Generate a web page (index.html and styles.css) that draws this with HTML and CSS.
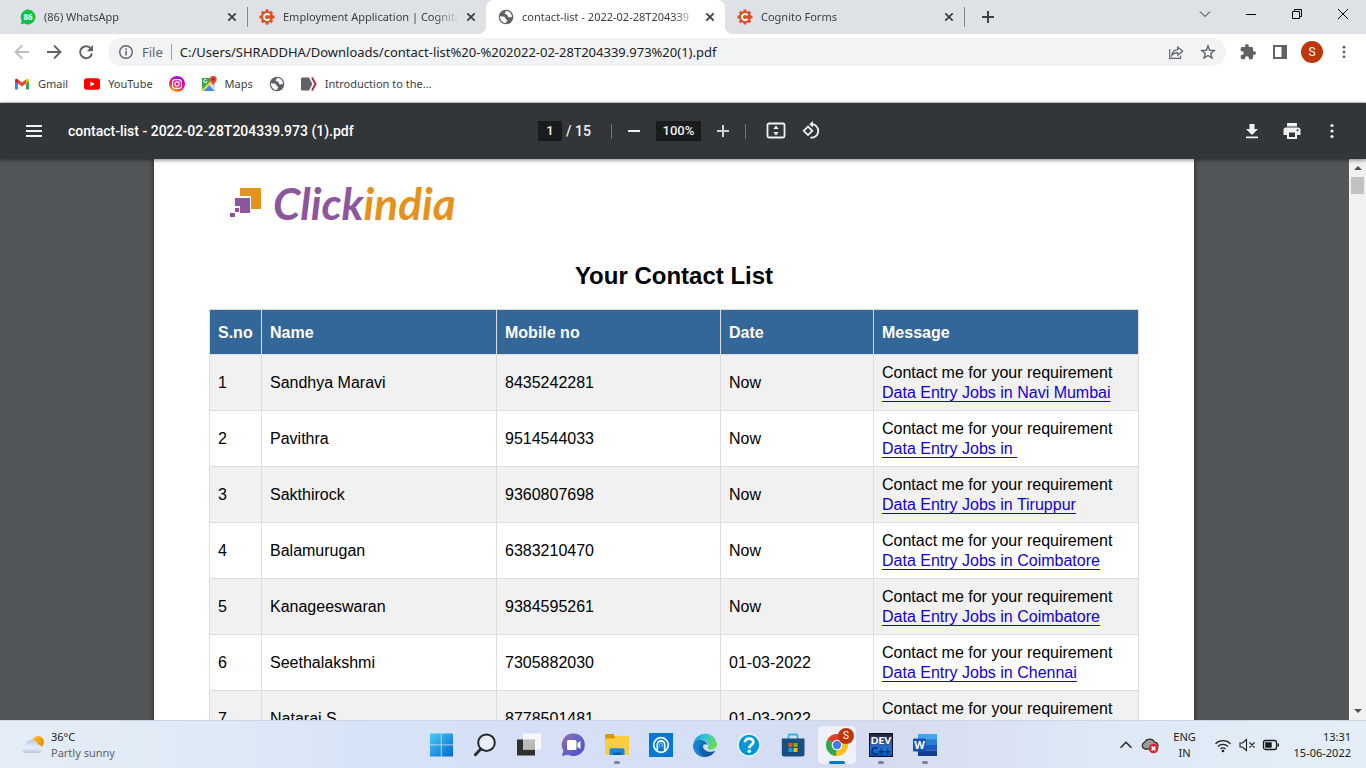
FILE: index.html
```html
<!DOCTYPE html>
<html lang="en">
<head>
<meta charset="utf-8">
<meta name="viewport" content="width=device-width, initial-scale=1">
<title>contact-list - 2022-02-28T204339.973 (1).pdf</title>
<link rel="stylesheet" href="styles.css">
</head>
<body>
<svg class="sprite" aria-hidden="true">
  <symbol id="x" viewBox="0 0 16 16"><path d="M4.3 4.3l7.4 7.4M11.7 4.3l-7.4 7.4" stroke="#3c4043" stroke-width="1.8" fill="none"/></symbol>
  <symbol id="cog" viewBox="0 0 16 16">
    <path d="M8 .5v15M.5 8h15M2.8 2.8l10.4 10.4M13.2 2.8L2.8 13.2" stroke="#dc5026" stroke-width="3"/>
    <circle cx="8" cy="8" r="6" fill="#dc5026"/>
    <path d="M10.500 6.300a3 3 0 1 0 0 3.400" stroke="#fff" stroke-width="1.900" fill="none"/>
  </symbol>
  <symbol id="globe" viewBox="0 0 16 16">
    <circle cx="8" cy="8" r="7.300" fill="#5f6368"/>
    <path d="M1.900 7.100c1.700.9 3.200.2 4.600.9 1.200.8.7 2.100 2.100 2.400 1.100.3.6 1.800-.3 2.500-.6.5-.5 1.200-1.100 1.200C4 13.600 1.900 10.900 1.900 7.100zM7.900 2.100c.2 1.400-1.200 1.300-1.100 2.500.2 1.200 1.900.5 2.600 1.500.6 1 .1 1.800 1.400 2.200 1.200.4 1.800-.6 3.200-.3C14.100 4.800 11.400 2 7.900 2.100z" fill="#fff"/>
  </symbol>
  <symbol id="dots" viewBox="0 0 16 16"><circle cx="8" cy="2.500" r="1.600"/><circle cx="8" cy="8" r="1.600"/><circle cx="8" cy="13.500" r="1.600"/></symbol>
</svg>

<header class="browser">
  <div class="tabs">
    <div class="tab">
      <svg class="i16" viewBox="0 0 16 16"><path d="M8 .6a7.400 7.400 0 1 1-3.500 13.900L.8 15.300l.9-3.600A7.400 7.400 0 0 1 8 .6z" fill="#0dc143"/><text x="8" y="10.800" class="wa-count">86</text></svg>
      <span class="tab-title">(86) WhatsApp</span>
      <button class="tab-close" aria-label="Close tab"><svg class="i16"><use href="#x"/></svg></button>
    </div>
    <div class="tab divided">
      <svg class="i16"><use href="#cog"/></svg>
      <span class="tab-title">Employment Application | Cognito</span>
      <button class="tab-close" aria-label="Close tab"><svg class="i16"><use href="#x"/></svg></button>
    </div>
    <div class="tab active">
      <svg class="i16"><use href="#globe"/></svg>
      <span class="tab-title">contact-list - 2022-02-28T204339</span>
      <button class="tab-close" aria-label="Close tab"><svg class="i16"><use href="#x"/></svg></button>
    </div>
    <div class="tab">
      <svg class="i16"><use href="#cog"/></svg>
      <span class="tab-title">Cognito Forms</span>
      <button class="tab-close" aria-label="Close tab"><svg class="i16"><use href="#x"/></svg></button>
    </div>
    <button class="new-tab" aria-label="New tab"><svg class="i16" viewBox="0 0 16 16"><path d="M8 2v12M2 8h12" stroke="#3c4043" stroke-width="2"/></svg></button>
    <div class="window-controls">
      <button aria-label="Search tabs"><svg class="i16" viewBox="0 0 16 16"><path d="M3 5.500l5 5 5-5" stroke="#222" fill="none"/></svg></button>
      <button aria-label="Minimize"><svg class="i16" viewBox="0 0 16 16"><path d="M3 8.500h10" stroke="#000"/></svg></button>
      <button aria-label="Restore"><svg class="i16" viewBox="0 0 16 16"><path d="M3.500 5.500h7v7h-7zM5.500 5.500v-2h7v7h-2" stroke="#000" fill="none"/></svg></button>
      <button aria-label="Close"><svg class="i16" viewBox="0 0 16 16"><path d="M3 3l10 10M13 3L3 13" stroke="#000"/></svg></button>
    </div>
  </div>

  <div class="toolbar">
    <button class="tool" aria-label="Back"><svg class="i16" viewBox="0 0 16 16"><path d="M15 8H2M8 1.500L1.500 8 8 14.500" stroke="#babcbe" stroke-width="1.800" fill="none"/></svg></button>
    <button class="tool" aria-label="Forward"><svg class="i16" viewBox="0 0 16 16"><path d="M1 8h13M8 1.500L14.500 8 8 14.500" stroke="#5f6368" stroke-width="1.800" fill="none"/></svg></button>
    <button class="tool" aria-label="Reload"><svg class="i16" viewBox="0 0 16 16"><path d="M13 4.600A6 6 0 1 0 14 9.500" stroke="#5f6368" stroke-width="2" fill="none"/><path d="M15 1v6.200H8.800z" fill="#5f6368"/></svg></button>
    <div class="omnibox">
      <svg class="i16" viewBox="0 0 16 16"><circle cx="8" cy="8" r="6.300" fill="none" stroke="#5f6368" stroke-width="1.400"/><path d="M8 7v4.500M8 4.300V6" stroke="#5f6368" stroke-width="1.500"/></svg>
      <span class="scheme">File</span>
      <input class="url" aria-label="Address" value="C:/Users/SHRADDHA/Downloads/contact-list%20-%202022-02-28T204339.973%20(1).pdf">
      <button class="tool" aria-label="Share"><svg class="i16" viewBox="0 0 16 16"><path d="M1.700 5v9.300h10.800v-2.500M3.800 11.500c.5-3.900 2.500-5.700 6-5.900V3l4.900 4.200-4.900 4V8.700c-2.600 0-4.500.8-6 2.800z" stroke="#5f6368" stroke-width="1.200" fill="none"/></svg></button>
      <button class="tool" aria-label="Bookmark"><svg class="i16" viewBox="0 0 16 16"><path d="M8 2l1.700 4.300 4.600.3-3.500 2.900 1.100 4.500L8 11.500 4.100 14l1.100-4.500-3.500-2.900 4.600-.3z" stroke="#5f6368" stroke-width="1.400" fill="none"/></svg></button>
    </div>
    <button class="tool" aria-label="Extensions"><svg class="i16" viewBox="1 1 22 22"><path fill="#5f6368" d="M20.500 11H19V7a2 2 0 0 0-2-2h-4V3.500a2.500 2.500 0 0 0-5 0V5H4a2 2 0 0 0-2 2v3.800h1.500a2.700 2.700 0 0 1 0 5.400H2V20a2 2 0 0 0 2 2h3.800v-1.500a2.700 2.700 0 0 1 5.400 0V22H17a2 2 0 0 0 2-2v-4h1.500a2.500 2.500 0 0 0 0-5z"/></svg></button>
    <button class="tool" aria-label="Side panel"><svg class="i16" viewBox="0 0 16 16"><path d="M1 1h14v14H1zM3 3v10h6.500V3z" fill="#5f6368" fill-rule="evenodd"/></svg></button>
    <button class="tool" aria-label="Profile"><span class="avatar">S</span></button>
    <button class="tool" aria-label="Menu"><svg class="i14" fill="#5f6368"><use href="#dots"/></svg></button>
  </div>

  <nav class="bookmarks">
    <a href="#"><svg class="i16" viewBox="0 0 16 16"><path d="M1 4v8.500c0 .7.400 1 1 1h2V7z" fill="#4285f4"/><path d="M15 4v8.500c0 .7-.4 1-1 1h-2V7z" fill="#34a853"/><path d="M4 3.600l4 3 4-3V7.500l-4 3-4-3z" fill="#ea4335"/><path d="M1 4.500c0-1.900 1.700-2.300 3-.9v3.900L1 5.300z" fill="#c5221f"/><path d="M15 4.500c0-1.900-1.700-2.300-3-.9v3.900l3-2.200z" fill="#fbbc04"/></svg>Gmail</a>
    <a href="#"><svg class="i16" viewBox="0 0 16 16"><rect y="2.300" width="16" height="11.400" rx="2.800" fill="#f00"/><path d="M6.400 5.500v5l4.300-2.500z" fill="#fff"/></svg>YouTube</a>
    <a href="#" aria-label="Instagram"><svg class="i16" viewBox="0 0 16 16"><defs><linearGradient id="ig" x1=".2" y1="1" x2=".7" y2="0"><stop offset="0" stop-color="#ffc800"/><stop offset=".4" stop-color="#ff1f56"/><stop offset=".75" stop-color="#d300c5"/><stop offset="1" stop-color="#7a18f0"/></linearGradient></defs><circle cx="8" cy="8" r="8" fill="url(#ig)"/><rect x="3.600" y="3.600" width="8.800" height="8.800" rx="2.400" fill="none" stroke="#fff" stroke-width="1.100"/><circle cx="8" cy="8" r="2.100" fill="none" stroke="#fff" stroke-width="1.100"/><circle cx="10.700" cy="5.400" r=".6" fill="#fff"/></svg></a>
    <a href="#"><svg class="i16" viewBox="0 0 16 16"><path d="M1 2h13v13H1z" fill="#34a853"/><path d="M8 8l6-3v10h-3z" fill="#d5d8dc"/><path d="M2.500 15L8 9.500l5.500 5.500z" fill="#4285f4"/><path d="M1 13.500L10.500 4l1.500 1.500L2.500 15H1z" fill="#fbd14b"/><path d="M6 5a1.600 1.600 0 1 1-.5-1.100" stroke="#fff" fill="none"/><path d="M12.300 0a3.300 3.300 0 0 1 3.300 3.300c0 2.700-2.700 3.500-3.300 6.700-.6-3.200-3.300-4-3.300-6.700A3.300 3.300 0 0 1 12.300 0z" fill="#ea4335"/><circle cx="12.300" cy="3.300" r="1.100" fill="#8c1c14"/></svg>Maps</a>
    <a href="#" aria-label="Website"><svg class="i16"><use href="#globe"/></svg></a>
    <a href="#"><svg class="i16" viewBox="0 0 16 16"><path d="M1.500 1.500H8L11.300 8 8 14.500H1.500c-1 0-1.500-.5-1.500-1.500V3c0-1 .5-1.500 1.500-1.500z" fill="#5f6166"/><path d="M11 1.500L14.500 8 11 14.500" stroke="#c22649" stroke-width="2" fill="none"/></svg>Introduction to the...</a>
  </nav>
</header>

<section class="pdf-bar">
  <div class="pdf-file">
    <button class="pdf-btn" aria-label="Menu"><svg class="i18" viewBox="0 0 18 18"><path d="M1 4h16M1 9h16M1 14h16" stroke="#f1f1f1" stroke-width="2"/></svg></button>
    <span class="pdf-title">contact-list - 2022-02-28T204339.973 (1).pdf</span>
  </div>
  <div class="pdf-controls">
    <input class="page-no" aria-label="Page number" value="1"><span class="page-count">/ 15</span>
    <span class="rule"></span>
    <button class="pdf-btn" aria-label="Zoom out"><svg class="i18" viewBox="0 0 18 18"><path d="M3 9h12" stroke="#f1f1f1" stroke-width="2"/></svg></button>
    <input class="zoom" aria-label="Zoom level" value="100%">
    <button class="pdf-btn" aria-label="Zoom in"><svg class="i18" viewBox="0 0 18 18"><path d="M3 9h12M9 3v12" stroke="#d0d1d2" stroke-width="2"/></svg></button>
    <span class="rule tight"></span>
    <button class="pdf-btn" aria-label="Fit to page"><svg class="i20" viewBox="0 0 20 20"><rect x="1.500" y="2.500" width="17" height="14" rx="1.500" stroke="#f1f1f1" stroke-width="1.800" fill="none"/><path d="M10 4.500L12.700 8H7.300zM10 14.500L12.700 11H7.300z" fill="#f1f1f1"/></svg></button>
    <button class="pdf-btn" aria-label="Rotate"><svg class="i20" viewBox="0 0 20 20"><path d="M1.700 9.800L6 5.500l4.300 4.300L6 14.100z" stroke="#f1f1f1" stroke-width="1.800" fill="none"/><path d="M10 3.200a6.700 6.700 0 1 1-1.500 13.300" stroke="#f1f1f1" stroke-width="1.800" fill="none"/><path d="M11 0v6.500L7.300 3.200z" fill="#f1f1f1"/></svg></button>
  </div>
  <div class="pdf-actions">
    <button class="pdf-btn" aria-label="Download"><svg class="i18" viewBox="0 0 18 18"><path d="M6.500 2h5v5H15l-6 6-6-6h3.500zM3 14.500h12v1.800H3z" fill="#f1f1f1"/></svg></button>
    <button class="pdf-btn" aria-label="Print"><svg class="i18" viewBox="0 0 18 18"><path d="M4 1h10v3.500H4zM3 5.500h12a2.500 2.500 0 0 1 2.500 2.500v5H14v4H4v-4H.5V8A2.500 2.500 0 0 1 3 5.500zM6 10.500v4.600h6v-4.600zM14.500 7.200a1 1 0 1 0 .1 0z" fill="#f1f1f1" fill-rule="evenodd"/></svg></button>
    <button class="pdf-btn" aria-label="More"><svg class="i16" fill="#f1f1f1"><use href="#dots"/></svg></button>
  </div>
</section>

<main class="viewer">
  <div class="canvas">
    <article class="page">
      <div class="brand">
        <svg class="brand-mark" viewBox="0 0 31 30"><path d="M10 0h21v21H21V8H10z" fill="#e5921d"/><path d="M5 10h15v15H10v-7H5z" fill="#8d559d"/><path d="M5 20h4v4H5zM0 25h5v4H0z" fill="#8d559d"/></svg>
        <span class="brand-name">Click<span class="brand-accent">india</span></span>
      </div>
      <h1 class="heading">Your Contact List</h1>
      <table class="contacts">
        <colgroup><col class="c-no"><col class="c-name"><col class="c-mobile"><col class="c-date"><col class="c-message"></colgroup>
        <thead><tr><th>S.no</th><th>Name</th><th>Mobile no</th><th>Date</th><th>Message</th></tr></thead>
        <tbody>
          <tr><td>1</td><td>Sandhya Maravi</td><td>8435242281</td><td>Now</td><td>Contact me for your requirement<br><a href="#">Data Entry Jobs in Navi Mumbai</a></td></tr>
          <tr><td>2</td><td>Pavithra</td><td>9514544033</td><td>Now</td><td>Contact me for your requirement<br><a href="#">Data Entry Jobs in&nbsp;</a></td></tr>
          <tr><td>3</td><td>Sakthirock</td><td>9360807698</td><td>Now</td><td>Contact me for your requirement<br><a href="#">Data Entry Jobs in Tiruppur</a></td></tr>
          <tr><td>4</td><td>Balamurugan</td><td>6383210470</td><td>Now</td><td>Contact me for your requirement<br><a href="#">Data Entry Jobs in Coimbatore</a></td></tr>
          <tr><td>5</td><td>Kanageeswaran</td><td>9384595261</td><td>Now</td><td>Contact me for your requirement<br><a href="#">Data Entry Jobs in Coimbatore</a></td></tr>
          <tr><td>6</td><td>Seethalakshmi</td><td>7305882030</td><td>01-03-2022</td><td>Contact me for your requirement<br><a href="#">Data Entry Jobs in Chennai</a></td></tr>
          <tr><td>7</td><td>Nataraj S</td><td>8778501481</td><td>01-03-2022</td><td>Contact me for your requirement<br><a href="#">Data Entry Jobs in Chennai</a></td></tr>
        </tbody>
      </table>
    </article>
  </div>
  <div class="scrollbar">
    <button class="scroll-btn" aria-label="Scroll up"><svg class="arrow" viewBox="0 0 8 4"><path d="M0 4l4-4 4 4z" fill="#505050"/></svg></button>
    <div class="thumb"></div>
    <button class="scroll-btn end" aria-label="Scroll down"><svg class="arrow" viewBox="0 0 8 4"><path d="M0 0l4 4 4-4z" fill="#505050"/></svg></button>
  </div>
</main>

<footer class="taskbar">
  <div class="weather">
    <svg class="weather-icon" viewBox="0 0 24 20"><defs><linearGradient id="sun" x1="0" y1="0" x2="1" y2="1"><stop offset="0" stop-color="#ffc818"/><stop offset="1" stop-color="#f07800"/></linearGradient><linearGradient id="cl" x1="0" y1="0" x2="0" y2="1"><stop offset="0" stop-color="#b3c8ea"/><stop offset=".6" stop-color="#e9f0fb"/><stop offset="1" stop-color="#b5c5e2"/></linearGradient></defs><circle cx="17" cy="7" r="6" fill="url(#sun)"/><path d="M5 18a4.300 4.300 0 0 1-.5-8.500A6.500 6.500 0 0 1 17 9.500 4.500 4.500 0 0 1 18.500 18z" fill="url(#cl)"/></svg>
    <div class="weather-text"><span>36°C</span><span class="muted">Partly sunny</span></div>
  </div>
  <div class="apps">
    <button class="app" aria-label="Start"><svg class="i24" viewBox="0 0 24 24"><defs><linearGradient id="win" x1="0" y1="0" x2="1" y2="1"><stop offset="0" stop-color="#48ccf8"/><stop offset="1" stop-color="#0268cf"/></linearGradient></defs><path d="M1 .5h10.800v11H1zM12.600.5H24v11H12.600zM1 12.300h10.800v11.200H1zM12.600 12.300H24v11.200H12.600z" fill="url(#win)"/></svg></button>
    <button class="app" aria-label="Search"><svg class="i24" viewBox="0 0 24 24"><circle cx="13.500" cy="9.700" r="8.300" fill="#e8effb" stroke="#26282c" stroke-width="2"/><path d="M7.800 16L2.300 21.800" stroke="#26282c" stroke-width="2.800" stroke-linecap="round"/></svg></button>
    <button class="app" aria-label="Task view"><svg class="i24" viewBox="0 0 24 24"><path d="M0 6.500h18v16H0z" fill="#30312f"/><path d="M6 .5h18v16H6z" fill="#f7f7f7"/><path d="M6 6.500h12v10H6z" fill="#bababa"/></svg></button>
    <button class="app" aria-label="Chat"><svg class="i24" viewBox="0 0 24 24"><defs><linearGradient id="chat" x1="0" y1="0" x2="1" y2="1"><stop offset="0" stop-color="#8f6bb0"/><stop offset=".5" stop-color="#6561c6"/><stop offset="1" stop-color="#4b50bf"/></linearGradient></defs><path d="M12.500.5a11.300 11.300 0 1 1-5.200 21.300L1 23l1.300-5.600A11.300 11.300 0 0 1 12.500.5z" fill="url(#chat)"/><rect x="6" y="7" width="9.500" height="10" rx="1.500" fill="#fff"/><path d="M16.500 10l3-2v8l-3-2z" fill="#fff"/></svg></button>
    <button class="app running" aria-label="File Explorer"><svg class="i24" viewBox="0 0 24 24"><path d="M0 2.500c0-1 .5-1.500 1.500-1.500H8l2.500 2.500H22c1.500 0 2 .5 2 2V8H0z" fill="#dc9a05"/><path d="M0 5.500h8.500L11 3h13v19H0z" fill="#fccd40"/><path d="M4.500 22v-4.500c0-1.500.8-2.300 2.300-2.300h10.500c1.400 0 2.200.8 2.200 2.300V22z" fill="#1687d9"/><path d="M8 19.500h8V22H8z" fill="#0b5da8"/></svg></button>
    <button class="app" aria-label="Assistant"><svg class="i24" viewBox="0 0 24 24"><path d="M0 0h24v24H0z" fill="#0078d4"/><circle cx="12" cy="12" r="7.300" stroke="#fff" stroke-width="1.700" fill="none"/><path d="M8.300 17.500v-6a3.700 3.700 0 0 1 7.400 0v6" stroke="#fff" stroke-width="1.700" fill="none"/><path d="M10.700 14.500V11a1.300 1.300 0 0 1 2.600 0v3.500" stroke="#8cc4f0" stroke-width="1" fill="none"/></svg></button>
    <button class="app" aria-label="Edge"><svg class="i24" viewBox="0 0 24 24"><defs><linearGradient id="e1" x1="0" y1="0" x2="1" y2=".4"><stop offset="0" stop-color="#148fd0"/><stop offset=".5" stop-color="#31c3e2"/><stop offset="1" stop-color="#66dc51"/></linearGradient><linearGradient id="e2" x1="0" y1="0" x2="1" y2="1"><stop offset="0" stop-color="#1683c9"/><stop offset="1" stop-color="#0c4a92"/></linearGradient></defs><path d="M.3 11A12 12 0 0 1 24 10.500c0 4-3 6-6 6-2.500 0-4.200-.9-3-2.500C16.500 11.500 14 7 8.500 7 4.500 7 1.500 9 .3 11z" fill="url(#e1)"/><path d="M.2 12C.8 8.500 4.500 6.700 8 7c3.500.2 6 2.300 6.500 5C10 9.500 8.500 14 12 17c3 2.400 7.400 2.300 10.200.8C20 22 16 24 12 24 5 24-.3 18.500.2 12z" fill="url(#e2)"/><path d="M8 9c-4 4-3 11.500 4 15C4 24 .5 18 .2 12 2 9 5 7.500 8 9z" fill="#1982d0"/></svg></button>
    <button class="app" aria-label="Help"><svg class="i24" viewBox="0 0 24 24"><circle cx="12" cy="12" r="11" fill="#0097d8" stroke="#eef6fd" stroke-width="1.500"/><path d="M8 9.300c0-5 8.300-4.800 8.300-.4 0 3-4 3-4 6.300" stroke="#fff" stroke-width="2.800" fill="none"/><circle cx="12.300" cy="18.300" r="1.800" fill="#fff"/></svg></button>
    <button class="app" aria-label="Store"><svg class="i24" viewBox="0 0 24 24"><path d="M7.500 6V2.500c0-.7.300-1 1-1h7c.7 0 1 .3 1 1V6" stroke="#2cb5e9" stroke-width="1.800" fill="none"/><path d="M.8 5.500h22.700V21c0 1.800-1 2.500-2.500 2.500H3.300C1.800 23.500.8 22.800.8 21z" fill="#1a4d80"/><path d="M7.500 10h4v4h-4z" fill="#f25022"/><path d="M12.500 10h4v4h-4z" fill="#7fba00"/><path d="M7.500 15h4v4h-4z" fill="#00a4ef"/><path d="M12.500 15h4v4h-4z" fill="#ffb900"/></svg></button>
    <button class="app current" aria-label="Chrome"><svg class="i24" viewBox="0 0 24 24"><circle cx="12" cy="12" r="11" fill="#fbc116"/><path d="M12 12L2.500 6.500a11 11 0 0 1 19 0z" fill="#e33b2e"/><path d="M12 12l-1 11A11 11 0 0 1 2.500 6.500z" fill="#2da94f"/><circle cx="12" cy="12" r="5.300" fill="#fff"/><circle cx="12" cy="12" r="4.200" fill="#3b7ded"/></svg><span class="app-badge">S</span></button>
    <button class="app running" aria-label="Dev-C++"><svg class="i24" viewBox="0 0 24 24"><defs><linearGradient id="dev" x1="0" y1="0" x2="0" y2="1"><stop offset="0" stop-color="#1b2032"/><stop offset=".4" stop-color="#3b5a9c"/><stop offset=".7" stop-color="#1c72dc"/><stop offset="1" stop-color="#0752b5"/></linearGradient></defs><path d="M0 0h24v24H0z" fill="#10131e"/><path d="M1 1h22v22H1z" fill="url(#dev)"/><text x="12" y="11" class="dev-top">DEV</text><text x="12" y="22" class="dev-low">C++</text></svg></button>
    <button class="app running" aria-label="Word"><svg class="i24" viewBox="0 0 24 24"><path d="M5 1h19v6H5z" fill="#41a5ee"/><path d="M5 6.500h19V12H5z" fill="#2b7cd3"/><path d="M5 12h19v5.500H5z" fill="#185abd"/><path d="M5 17.500h19V23H5z" fill="#103f91"/><rect y="5.500" width="13" height="13" rx="1" fill="#1653b2"/><text x="6.500" y="16" class="word-w">W</text></svg></button>
  </div>
  <div class="tray">
    <button class="tray-btn" aria-label="Hidden icons"><svg class="i16" viewBox="0 0 16 16"><path d="M2.500 10.800L8 5.300l5.500 5.500" stroke="#1b1b1b" stroke-width="1.400" fill="none"/></svg></button>
    <button class="tray-btn" aria-label="OneDrive"><svg class="i18" viewBox="0 0 18 18"><path d="M4.500 13a3.500 3.500 0 0 1-.8-6.800 5.600 5.600 0 0 1 10 0A3.600 3.600 0 0 1 15 13z" fill="#9b9b9b" stroke="#333" stroke-width="1.300"/><circle cx="12.500" cy="12.500" r="4.800" fill="#d9252d"/><path d="M10.600 10.600l3.800 3.800M14.400 10.600l-3.800 3.800" stroke="#fff" stroke-width="1.600"/></svg></button>
    <div class="lang"><span>ENG</span><span>IN</span></div>
    <div class="status">
      <svg class="i18" viewBox="0 0 18 18"><path d="M1.500 7.800a10.600 10.600 0 0 1 15 0M4 10.500a7 7 0 0 1 10 0M6.500 13a3.600 3.600 0 0 1 5 0" stroke="#222" stroke-width="1.200" fill="none"/><circle cx="9" cy="15" r="1.300" fill="#222"/></svg>
      <svg class="i18" viewBox="0 0 18 18"><path d="M2 7h2.500l4-3.500v11L4.500 11H2zM11.500 6.500l5 5M16.500 6.500l-5 5" stroke="#222" stroke-width="1.100" fill="none"/></svg>
      <svg class="i18" viewBox="0 0 18 18"><rect x="1.500" y="4.500" width="13" height="9" rx="2" stroke="#1b1b1b" stroke-width="1.300" fill="none"/><path d="M3.200 6.200h6.500v5.600H3.200zM15.500 7.500H17v3h-1.500z" fill="#1b1b1b"/></svg>
    </div>
    <div class="clock"><span>13:31</span><span>15-06-2022</span></div>
  </div>
</footer>
</body>
</html>
```
FILE: styles.css
```css
* { box-sizing: border-box; }
body {
  margin: 0;
  height: 100vh;
  display: flex;
  flex-direction: column;
  overflow: hidden;
  font: 11px/16px "Noto Sans", "Open Sans", sans-serif;
  color: #3c4043;
}
button {
  border: 0;
  padding: 0;
  background: none;
  font: inherit;
  color: inherit;
  display: flex;
  align-items: center;
  justify-content: center;
  flex: none;
}
input { border: 0; padding: 0; font: inherit; color: inherit; min-width: 0; }
svg { flex: none; display: block; }
.sprite { width: 0; height: 0; position: absolute; }
.i14 { width: 14px; height: 14px; }
.i16 { width: 16px; height: 16px; }
.i18 { width: 18px; height: 18px; }
.i20 { width: 20px; height: 20px; }
.i24 { width: 24px; height: 24px; }

/* Browser tabs */
.browser { background: #fff; border-bottom: 1px solid #d5dadc; flex: none; }
.tabs { display: flex; height: 34px; padding-left: 8px; background: #dee1e6; }
.tab {
  flex: 0 1 239px;
  min-width: 0;
  display: flex;
  align-items: center;
  gap: 8px;
  padding: 0 7px 0 12px;
  position: relative;
}
.tab.active { background: #fff; border-radius: 8px 8px 0 0; }
.tab.active::before, .tab.active::after {
  content: "";
  position: absolute;
  bottom: 0;
  width: 8px;
  height: 8px;
}
.tab.active::before { left: -8px; background: radial-gradient(circle at 0 0, transparent 8px, #fff 8px); }
.tab.active::after { right: -8px; background: radial-gradient(circle at 100% 0, transparent 8px, #fff 8px); }
.tab.divided::before {
  content: "";
  position: absolute;
  left: 0;
  top: 7px;
  width: 1px;
  height: 20px;
  background: #84878b;
}
.tab-title {
  flex: 1;
  overflow: hidden;
  white-space: nowrap;
  -webkit-mask-image: linear-gradient(to left, transparent, #000 24px);
  mask-image: linear-gradient(to left, transparent, #000 24px);
}
.tab-title + .tab-close { margin-left: -4px; }
.new-tab { width: 46px; height: 20px; margin-top: 7px; border-left: 1px solid #84878b; }
.window-controls { display: flex; margin-left: auto; }
.window-controls button { width: 46px; height: 28px; }
.wa-count { font: bold 8px "Open Sans", sans-serif; fill: #fff; text-anchor: middle; }

/* Address row */
.toolbar { display: flex; align-items: center; height: 36px; padding: 0 6px; }
.tool { width: 32px; height: 28px; }
.omnibox {
  flex: 1;
  min-width: 0;
  display: flex;
  align-items: center;
  height: 28px;
  margin: 0 6px;
  padding: 0 2px 0 10px;
  border-radius: 14px;
  background: #f1f3f4;
  font-size: 13px;
}
.scheme { margin-left: 8px; padding-right: 8px; border-right: 1px solid #9aa0a6; color: #5f6368; }
.url { flex: 1; margin-left: 8px; background: none; color: #202124; }
.avatar {
  width: 22px;
  height: 22px;
  border-radius: 50%;
  background: #bf360c;
  color: #fff;
  font: 12px/22px Roboto, sans-serif;
}
.bookmarks { display: flex; align-items: center; gap: 16px; height: 32px; padding: 0 14px 4px; }
.bookmarks a { display: flex; align-items: center; gap: 8px; color: #3c4043; text-decoration: none; white-space: nowrap; }

/* PDF toolbar */
.pdf-bar {
  flex: none;
  display: grid;
  grid-template-columns: 1fr auto 1fr;
  align-items: center;
  height: 56px;
  background: #323639;
  color: #f1f1f1;
  font: 500 14px/20px Roboto, sans-serif;
  box-shadow: 0 1px 4px rgba(0, 0, 0, .5);
  position: relative;
  z-index: 1;
}
.pdf-file, .pdf-controls, .pdf-actions { display: flex; align-items: center; min-width: 0; }
.pdf-file { gap: 18px; padding-left: 18px; }
.pdf-title { overflow: hidden; white-space: nowrap; text-overflow: ellipsis; color: #fff; }
.pdf-controls { font-size: 13px; }
.page-count { font-size: 14px; }
.pdf-btn { width: 32px; height: 32px; }
.pdf-btn + .pdf-btn { margin-left: 4px; }
.pdf-actions { justify-content: flex-end; gap: 4px; padding-right: 18px; }
.page-no, .zoom { height: 20px; background: #191b1c; text-align: center; }
.page-no { width: 24px; margin-right: 4px; }
.zoom { width: 45px; margin: 0 6px; }
.rule { width: 1px; height: 15px; margin: 0 6px 0 20px; background: #70757a; }
.rule.tight { margin: 0 14px 0 6px; }

/* PDF viewer */
.viewer { flex: 1; min-height: 0; display: flex; overflow: hidden; background: #525659; }
.canvas { flex: 1; min-width: 0; overflow: hidden; padding-right: 1px; }
.page {
  max-width: 1040px;
  min-height: 100%;
  margin: 0 auto;
  padding: 24px 55px;
  background: #fff;
  color: #000;
  box-shadow: 0 0 5px rgba(0, 0, 0, .6);
  font: 16px/20px "Liberation Sans", Arial, sans-serif;
}
.brand { display: flex; align-items: center; gap: 12px; height: 40px; padding-left: 21px; }
.brand-mark { width: 31px; height: 30px; }
.brand-name { font: italic bold 44px/40px Lato, sans-serif; color: #8d559d; }
.brand-accent { color: #e5921d; }
.heading { margin: 38px 0 18px; font-size: 24px; line-height: 30px; text-align: center; }
.contacts { width: 100%; border-collapse: collapse; table-layout: fixed; }
.c-no { width: 52px; }
.c-name { width: 235px; }
.c-mobile { width: 224px; }
.c-date { width: 153px; }
.contacts th, .contacts td { border: 1px solid #ddd; text-align: left; }
.contacts th { padding: 13px 8px 11px; background: #336699; color: #fff; }
.contacts td { padding: 8px 8px 7px; }
.contacts tbody tr:nth-child(odd) { background: #f1f1f1; }
.contacts a { color: #1200d6; text-decoration: underline 1px; text-underline-offset: 3px; text-decoration-skip-ink: none; }

.scrollbar { flex: none; display: flex; flex-direction: column; align-items: center; width: 17px; background: #f1f1f1; }
.scroll-btn { width: 17px; height: 18px; }
.scroll-btn.end { margin-top: auto; }
.arrow { width: 8px; height: 4px; }
.thumb { width: 13px; height: 17px; background: #c1c1c1; }

/* Taskbar */
.taskbar {
  flex: none;
  display: grid;
  grid-template-columns: 1fr auto 1fr;
  align-items: center;
  height: 48px;
  border-top: 1px solid #ccd6e4;
  background: linear-gradient(to right, #e4edf6 0, #e0eaf6 15%, #d6e2f8 28%, #d5dff6 50%, #d5dcf1 65%, #dfe9f6 82%, #e3eef7 100%);
  color: #1b1b1b;
}
.weather { display: flex; align-items: center; gap: 6px; padding-left: 21px; }
.weather-icon { width: 24px; height: 20px; }
.weather-text, .lang, .clock { display: flex; flex-direction: column; }
.muted { color: #5b6068; }
.apps { display: flex; gap: 6px; }
.app { width: 38px; height: 38px; border-radius: 4px; position: relative; }
.app.current { background: #eef1fa; box-shadow: 0 0 1px #b5bccb; }
.app.running::after, .app.current::after {
  content: "";
  position: absolute;
  bottom: 0;
  width: 6px;
  height: 3px;
  border-radius: 2px;
  background: #7d828d;
}
.app.current::after { width: 16px; background: #0078d4; }
.app-badge {
  position: absolute;
  right: 2px;
  top: 2px;
  width: 16px;
  height: 16px;
  border-radius: 50%;
  background: #bf360c;
  color: #fff;
  font: 10px/16px Roboto, sans-serif;
}
.dev-top { font: 900 10px Lato, sans-serif; fill: #fff; text-anchor: middle; }
.dev-low { font: 900 11px Lato, sans-serif; fill: #082d6a; text-anchor: middle; }
.word-w { font: bold 11px "Open Sans", sans-serif; fill: #fff; text-anchor: middle; }
.tray { display: flex; align-items: center; justify-content: flex-end; padding-right: 15px; }
.tray-btn { width: 24px; height: 32px; }
.lang { width: 46px; text-align: center; }
.status { display: flex; gap: 6px; margin: 0 14px 0 6px; }
.clock { text-align: right; }
```
